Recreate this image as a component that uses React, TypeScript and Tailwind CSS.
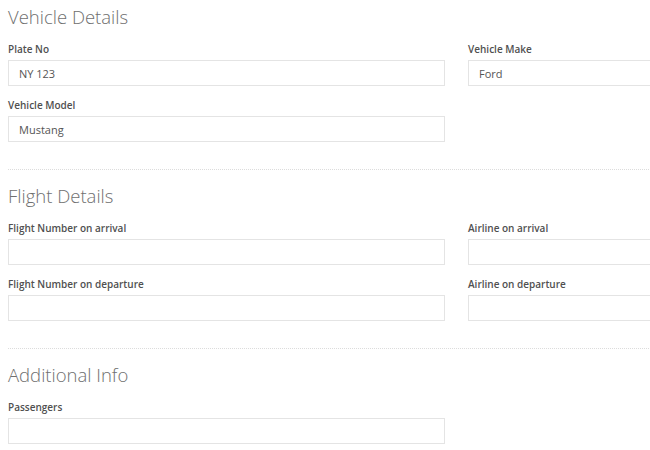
const font = { fontFamily: '"Open Sans", "Liberation Sans", sans-serif' }

interface FieldProps {
  label: string
  value?: string
}

function Field({ label, value = '' }: FieldProps) {
  return (
    <div className="mb-3">
      <label className="block text-[10px] leading-[14px] font-semibold text-[#505050] mb-1">{label}</label>
      <input
        readOnly
        value={value}
        className="block w-full h-[26px] px-[10px] border border-[#e4e4e4] text-[11px] text-[#555] bg-white outline-none"
        style={font}
      />
    </div>
  )
}

function Section({ title, children }: { title: string; children: React.ReactNode }) {
  return (
    <div>
      <h2 className="text-[18.5px] leading-6 font-light text-[#6f6f6f] mb-[13px]">{title}</h2>
      <div className="grid grid-cols-2 gap-x-[23px]">{children}</div>
    </div>
  )
}

function Divider() {
  return <div className="border-t border-dotted border-[#dcdcdc] mt-[15px] mb-[14px]" />
}

export default function App() {
  return (
    <div className="w-full h-[450px] overflow-hidden bg-white" style={font}>
      <div className="w-[905px] pl-2 pt-[5px]">
        <Section title="Vehicle Details">
          <Field label="Plate No" value="NY 123" />
          <Field label="Vehicle Make" value="Ford" />
          <Field label="Vehicle Model" value="Mustang" />
        </Section>
        <Divider />
        <Section title="Flight Details">
          <Field label="Flight Number on arrival" />
          <Field label="Airline on arrival" />
          <Field label="Flight Number on departure" />
          <Field label="Airline on departure" />
        </Section>
        <Divider />
        <Section title="Additional Info">
          <Field label="Passengers" />
        </Section>
      </div>
    </div>
  )
}
